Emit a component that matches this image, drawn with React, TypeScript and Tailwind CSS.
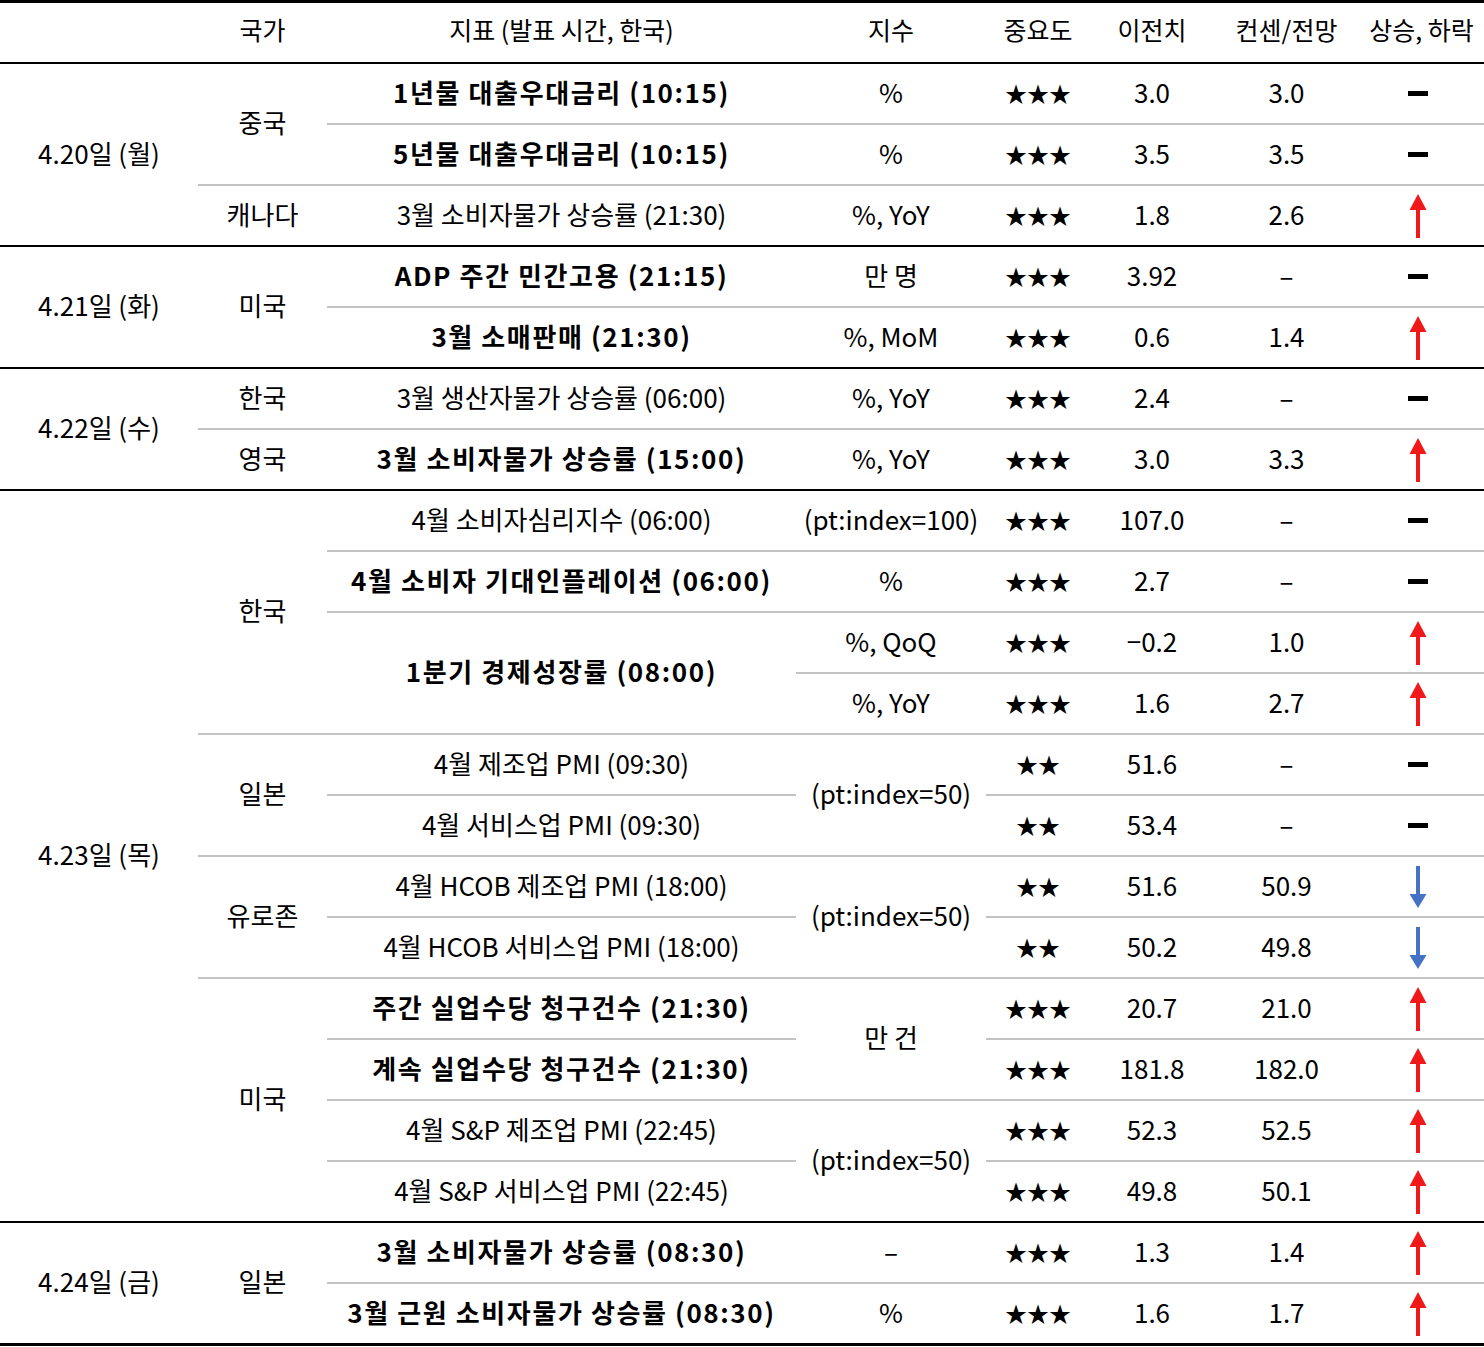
import React from "react";

type Trend = "up" | "down" | "flat";

interface Row {
  top?: boolean;
  date?: string;
  dateSpan?: number;
  country?: string;
  countrySpan?: number;
  name?: string;
  nameSpan?: number;
  bold?: boolean;
  unit?: string;
  unitSpan?: number;
  stars: number;
  prev: string;
  cons: string;
  trend: Trend;
}

const rows: Row[] = [
  { top: true, date: "4.20일 (월)", dateSpan: 3, country: "중국", countrySpan: 2, name: "1년물 대출우대금리 (10:15)", bold: true, unit: "%", stars: 3, prev: "3.0", cons: "3.0", trend: "flat" },
  { name: "5년물 대출우대금리 (10:15)", bold: true, unit: "%", stars: 3, prev: "3.5", cons: "3.5", trend: "flat" },
  { country: "캐나다", name: "3월 소비자물가 상승률 (21:30)", unit: "%, YoY", stars: 3, prev: "1.8", cons: "2.6", trend: "up" },
  { top: true, date: "4.21일 (화)", dateSpan: 2, country: "미국", countrySpan: 2, name: "ADP 주간 민간고용 (21:15)", bold: true, unit: "만 명", stars: 3, prev: "3.92", cons: "–", trend: "flat" },
  { name: "3월 소매판매 (21:30)", bold: true, unit: "%, MoM", stars: 3, prev: "0.6", cons: "1.4", trend: "up" },
  { top: true, date: "4.22일 (수)", dateSpan: 2, country: "한국", name: "3월 생산자물가 상승률 (06:00)", unit: "%, YoY", stars: 3, prev: "2.4", cons: "–", trend: "flat" },
  { country: "영국", name: "3월 소비자물가 상승률 (15:00)", bold: true, unit: "%, YoY", stars: 3, prev: "3.0", cons: "3.3", trend: "up" },
  { top: true, date: "4.23일 (목)", dateSpan: 12, country: "한국", countrySpan: 4, name: "4월 소비자심리지수 (06:00)", unit: "(pt:index=100)", stars: 3, prev: "107.0", cons: "–", trend: "flat" },
  { name: "4월 소비자 기대인플레이션 (06:00)", bold: true, unit: "%", stars: 3, prev: "2.7", cons: "–", trend: "flat" },
  { name: "1분기 경제성장률 (08:00)", nameSpan: 2, bold: true, unit: "%, QoQ", stars: 3, prev: "−0.2", cons: "1.0", trend: "up" },
  { unit: "%, YoY", stars: 3, prev: "1.6", cons: "2.7", trend: "up" },
  { country: "일본", countrySpan: 2, name: "4월 제조업 PMI (09:30)", unit: "(pt:index=50)", unitSpan: 2, stars: 2, prev: "51.6", cons: "–", trend: "flat" },
  { name: "4월 서비스업 PMI (09:30)", stars: 2, prev: "53.4", cons: "–", trend: "flat" },
  { country: "유로존", countrySpan: 2, name: "4월 HCOB 제조업 PMI (18:00)", unit: "(pt:index=50)", unitSpan: 2, stars: 2, prev: "51.6", cons: "50.9", trend: "down" },
  { name: "4월 HCOB 서비스업 PMI (18:00)", stars: 2, prev: "50.2", cons: "49.8", trend: "down" },
  { country: "미국", countrySpan: 4, name: "주간 실업수당 청구건수 (21:30)", bold: true, unit: "만 건", unitSpan: 2, stars: 3, prev: "20.7", cons: "21.0", trend: "up" },
  { name: "계속 실업수당 청구건수 (21:30)", bold: true, stars: 3, prev: "181.8", cons: "182.0", trend: "up" },
  { name: "4월 S&P 제조업 PMI (22:45)", unit: "(pt:index=50)", unitSpan: 2, stars: 3, prev: "52.3", cons: "52.5", trend: "up" },
  { name: "4월 S&P 서비스업 PMI (22:45)", stars: 3, prev: "49.8", cons: "50.1", trend: "up" },
  { top: true, date: "4.24일 (금)", dateSpan: 2, country: "일본", countrySpan: 2, name: "3월 소비자물가 상승률 (08:30)", bold: true, unit: "–", stars: 3, prev: "1.3", cons: "1.4", trend: "up" },
  { name: "3월 근원 소비자물가 상승률 (08:30)", bold: true, unit: "%", stars: 3, prev: "1.6", cons: "1.7", trend: "up" },
];

const UpArrow = () => (
  <svg width="18" height="44" viewBox="0 0 18 44">
    <polygon points="9,0 17.5,16 0.5,16" fill="#f01818" />
    <rect x="7" y="14" width="4" height="30" fill="#f01818" />
  </svg>
);

const DownArrow = () => (
  <svg width="18" height="42" viewBox="0 0 18 42">
    <rect x="7" y="0" width="4" height="30" fill="#4472c4" />
    <polygon points="9,42 17.5,28 0.5,28" fill="#4472c4" />
  </svg>
);

const TrendMark = ({ trend }: { trend: Trend }) => {
  if (trend === "up") return <UpArrow />;
  if (trend === "down") return <DownArrow />;
  return <div className="w-[20px] h-[5px] bg-black" />;
};

const Cell = ({
  top,
  span,
  bold,
  className = "",
  children,
}: {
  top?: boolean;
  span?: number;
  bold?: boolean;
  className?: string;
  children: React.ReactNode;
}) => (
  <td
    rowSpan={span}
    className={`p-0 pb-[4px] text-center align-middle whitespace-nowrap border-t-2 ${
      top ? "border-black" : "border-[#c3c3c3]"
    } ${bold ? "font-bold tracking-[1.6px]" : ""} ${className}`}
  >
    {children}
  </td>
);

const headers = ["", "국가", "지표 (발표 시간, 한국)", "지수", "중요도", "이전치", "컨센/전망", "상승, 하락"];

export default function App() {
  return (
    <div className="w-[1484px] bg-white text-black font-['Noto_Sans_CJK_KR',sans-serif] text-[26px] leading-none">
      <div className="border-b-[3px] border-black">
        <table className="w-full table-fixed border-separate border-spacing-0">
          <colgroup>
            <col className="w-[198px]" />
            <col className="w-[129px]" />
            <col className="w-[469px]" />
            <col className="w-[190px]" />
            <col className="w-[104px]" />
            <col className="w-[124px]" />
            <col className="w-[145px]" />
            <col className="w-[125px]" />
          </colgroup>
          <thead>
            <tr className="h-[62px]">
              {headers.map((h, i) => (
                <th
                  key={i}
                  className="p-0 pb-[6px] font-normal text-[25px] text-center align-middle whitespace-nowrap border-t-[3px] border-black"
                >
                  {h}
                </th>
              ))}
            </tr>
          </thead>
          <tbody>
            {rows.map((r, i) => (
              <tr key={i} className="h-[61px]">
                {r.date !== undefined && (
                  <Cell top span={r.dateSpan}>
                    {r.date}
                  </Cell>
                )}
                {r.country !== undefined && (
                  <Cell top={r.top} span={r.countrySpan}>
                    {r.country}
                  </Cell>
                )}
                {r.name !== undefined && (
                  <Cell top={r.top} span={r.nameSpan} bold={r.bold}>
                    {r.name}
                  </Cell>
                )}
                {r.unit !== undefined && (
                  <Cell top={r.top} span={r.unitSpan}>
                    {r.unit}
                  </Cell>
                )}
                <Cell top={r.top} className="text-[22px]">
                  {"★".repeat(r.stars)}
                </Cell>
                <Cell top={r.top}>{r.prev}</Cell>
                <Cell top={r.top}>{r.cons}</Cell>
                <Cell top={r.top} className="!pb-0">
                  <div className="flex justify-center items-center pr-[7px]">
                    <TrendMark trend={r.trend} />
                  </div>
                </Cell>
              </tr>
            ))}
          </tbody>
        </table>
      </div>
    </div>
  );
}
